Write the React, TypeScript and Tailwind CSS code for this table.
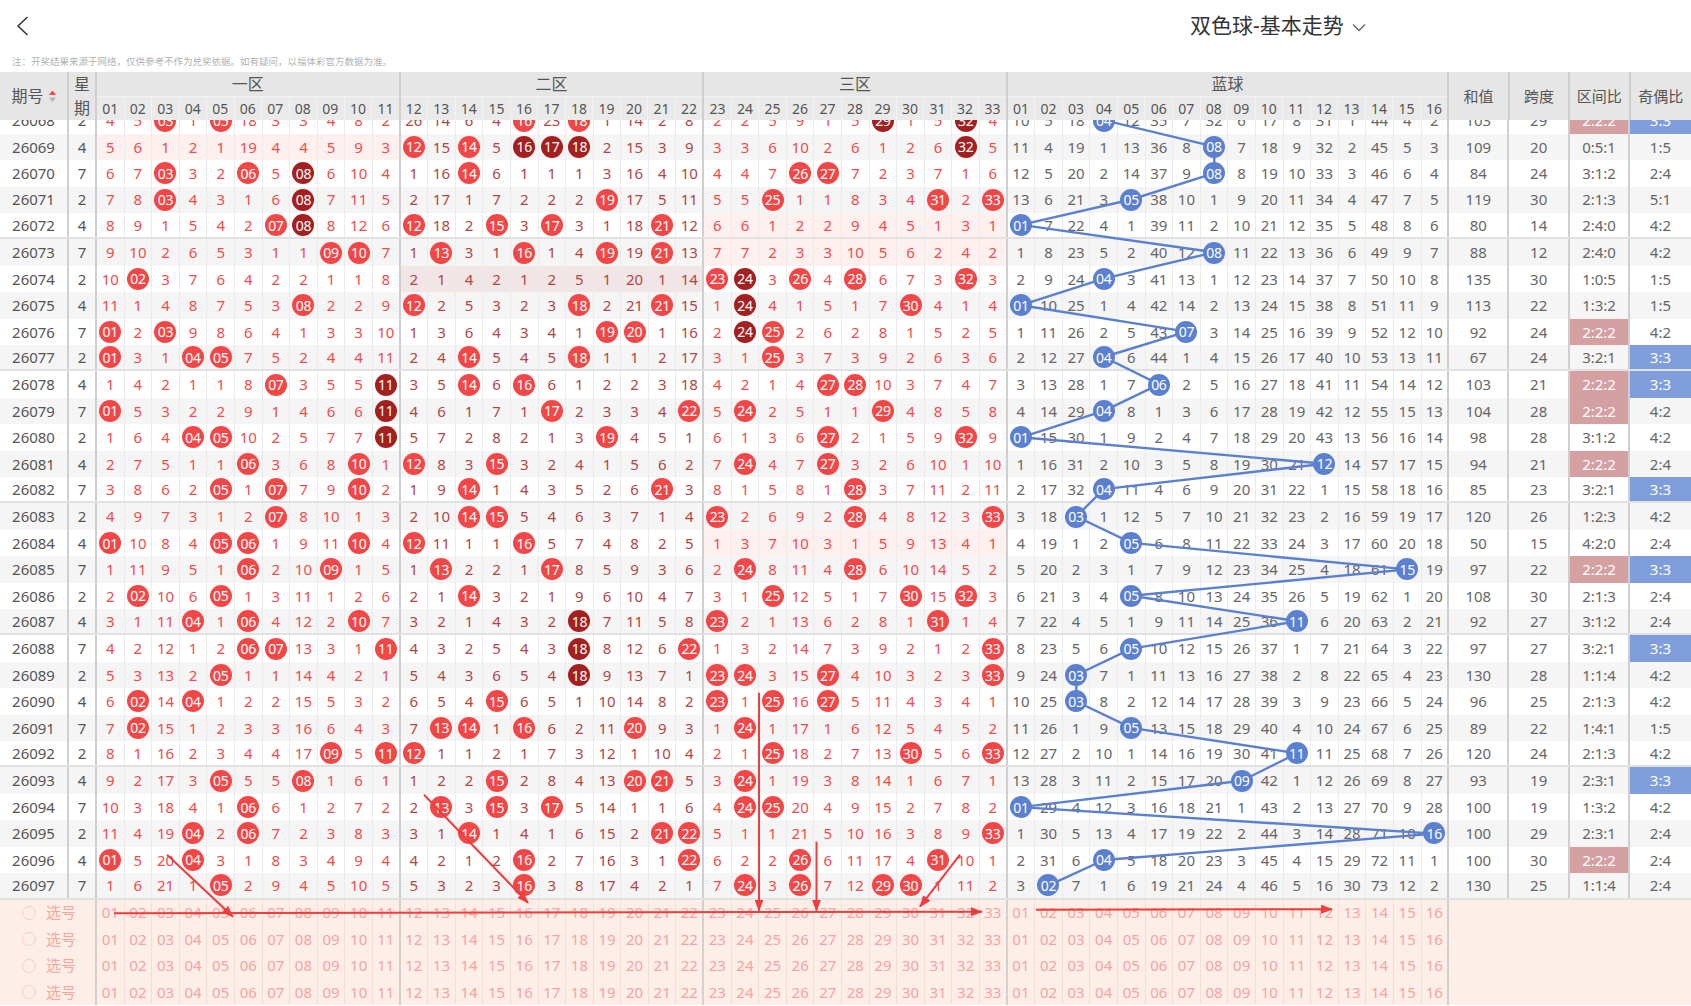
import React from "react";

// 期号|星期|红球遗漏(33)|蓝球遗漏(16)|和值|跨度|区间比|奇偶比   (* = 出球, # = 深色出球)
const RAW = `
26068|2|4 5 * 1 * 18 3 3 4 8 2 26 14 6 4 * 23 * 1 14 2 8 2 2 5 9 1 5 # 1 5 # 4|10 5 18 * 12 35 7 32 6 17 8 31 1 44 4 2|103|29|2:2:2|3:3
26069|4|5 6 1 2 1 19 4 4 5 9 3 * 15 * 5 # # # 2 15 3 9 3 3 6 10 2 6 1 2 6 # 5|11 4 19 1 13 36 8 * 7 18 9 32 2 45 5 3|109|20|0:5:1|1:5
26070|7|6 7 * 3 2 * 5 # 6 10 4 1 16 * 6 1 1 1 3 16 4 10 4 4 7 * * 7 2 3 7 1 6|12 5 20 2 14 37 9 * 8 19 10 33 3 46 6 4|84|24|3:1:2|2:4
26071|2|7 8 * 4 3 1 6 # 7 11 5 2 17 1 7 2 2 2 * 17 5 11 5 5 * 1 1 8 3 4 * 2 *|13 6 21 3 * 38 10 1 9 20 11 34 4 47 7 5|119|30|2:1:3|5:1
26072|4|8 9 1 5 4 2 * # 8 12 6 * 18 2 * 3 * 3 1 18 * 12 6 6 1 2 2 9 4 5 1 3 1|* 7 22 4 1 39 11 2 10 21 12 35 5 48 8 6|80|14|2:4:0|4:2
26073|7|9 10 2 6 5 3 1 1 * * 7 1 * 3 1 * 1 4 * 19 * 13 7 7 2 3 3 10 5 6 2 4 2|1 8 23 5 2 40 12 * 11 22 13 36 6 49 9 7|88|12|2:4:0|4:2
26074|2|10 * 3 7 6 4 2 2 1 1 8 2 1 4 2 1 2 5 1 20 1 14 * # 3 * 4 * 6 7 3 * 3|2 9 24 * 3 41 13 1 12 23 14 37 7 50 10 8|135|30|1:0:5|1:5
26075|4|11 1 4 8 7 5 3 * 2 2 9 * 2 5 3 2 3 * 2 21 * 15 1 # 4 1 5 1 7 * 4 1 4|* 10 25 1 4 42 14 2 13 24 15 38 8 51 11 9|113|22|1:3:2|1:5
26076|7|* 2 * 9 8 6 4 1 3 3 10 1 3 6 4 3 4 1 * * 1 16 2 # * 2 6 2 8 1 5 2 5|1 11 26 2 5 43 * 3 14 25 16 39 9 52 12 10|92|24|2:2:2|4:2
26077|2|* 3 1 * * 7 5 2 4 4 11 2 4 * 5 4 5 * 1 1 2 17 3 1 * 3 7 3 9 2 6 3 6|2 12 27 * 6 44 1 4 15 26 17 40 10 53 13 11|67|24|3:2:1|3:3
26078|4|1 4 2 1 1 8 * 3 5 5 # 3 5 * 6 * 6 1 2 2 3 18 4 2 1 4 * * 10 3 7 4 7|3 13 28 1 7 * 2 5 16 27 18 41 11 54 14 12|103|21|2:2:2|3:3
26079|7|* 5 3 2 2 9 1 4 6 6 # 4 6 1 7 1 * 2 3 3 4 * 5 * 2 5 1 1 * 4 8 5 8|4 14 29 * 8 1 3 6 17 28 19 42 12 55 15 13|104|28|2:2:2|4:2
26080|2|1 6 4 * * 10 2 5 7 7 # 5 7 2 8 2 1 3 * 4 5 1 6 1 3 6 * 2 1 5 9 * 9|* 15 30 1 9 2 4 7 18 29 20 43 13 56 16 14|98|28|3:1:2|4:2
26081|4|2 7 5 1 1 * 3 6 8 * 1 * 8 3 * 3 2 4 1 5 6 2 7 * 4 7 * 3 2 6 10 1 10|1 16 31 2 10 3 5 8 19 30 21 * 14 57 17 15|94|21|2:2:2|2:4
26082|7|3 8 6 2 * 1 * 7 9 * 2 1 9 * 1 4 3 5 2 6 * 3 8 1 5 8 1 * 3 7 11 2 11|2 17 32 * 11 4 6 9 20 31 22 1 15 58 18 16|85|23|3:2:1|3:3
26083|2|4 9 7 3 1 2 * 8 10 1 3 2 10 * * 5 4 6 3 7 1 4 * 2 6 9 2 * 4 8 12 3 *|3 18 * 1 12 5 7 10 21 32 23 2 16 59 19 17|120|26|1:2:3|4:2
26084|4|* 10 8 4 * * 1 9 11 * 4 * 11 1 1 * 5 7 4 8 2 5 1 3 7 10 3 1 5 9 13 4 1|4 19 1 2 * 6 8 11 22 33 24 3 17 60 20 18|50|15|4:2:0|2:4
26085|7|1 11 9 5 1 * 2 10 * 1 5 1 * 2 2 1 * 8 5 9 3 6 2 * 8 11 4 * 6 10 14 5 2|5 20 2 3 1 7 9 12 23 34 25 4 18 61 * 19|97|22|2:2:2|3:3
26086|2|2 * 10 6 * 1 3 11 1 2 6 2 1 * 3 2 1 9 6 10 4 7 3 1 * 12 5 1 7 * 15 * 3|6 21 3 4 * 8 10 13 24 35 26 5 19 62 1 20|108|30|2:1:3|2:4
26087|4|3 1 11 * 1 * 4 12 2 * 7 3 2 1 4 3 2 # 7 11 5 8 * 2 1 13 6 2 8 1 * 1 4|7 22 4 5 1 9 11 14 25 36 * 6 20 63 2 21|92|27|3:1:2|2:4
26088|7|4 2 12 1 2 * * 13 3 1 * 4 3 2 5 4 3 # 8 12 6 * 1 3 2 14 7 3 9 2 1 2 *|8 23 5 6 * 10 12 15 26 37 1 7 21 64 3 22|97|27|3:2:1|3:3
26089|2|5 3 13 2 * 1 1 14 4 2 1 5 4 3 6 5 4 # 9 13 7 1 * * 3 15 * 4 10 3 2 3 *|9 24 * 7 1 11 13 16 27 38 2 8 22 65 4 23|130|28|1:1:4|4:2
26090|4|6 * 14 * 1 2 2 15 5 3 2 6 5 4 * 6 5 1 10 14 8 2 * 1 * 16 * 5 11 4 3 4 1|10 25 * 8 2 12 14 17 28 39 3 9 23 66 5 24|96|25|2:1:3|4:2
26091|7|7 * 15 1 2 3 3 16 6 4 3 7 * * 1 * 6 2 11 * 9 3 1 * 1 17 1 6 12 5 4 5 2|11 26 1 9 * 13 15 18 29 40 4 10 24 67 6 25|89|22|1:4:1|1:5
26092|2|8 1 16 2 3 4 4 17 * 5 * * 1 1 2 1 7 3 12 1 10 4 2 1 * 18 2 7 13 * 5 6 *|12 27 2 10 1 14 16 19 30 41 * 11 25 68 7 26|120|24|2:1:3|4:2
26093|4|9 2 17 3 * 5 5 * 1 6 1 1 2 2 * 2 8 4 13 * * 5 3 * 1 19 3 8 14 1 6 7 1|13 28 3 11 2 15 17 20 * 42 1 12 26 69 8 27|93|19|2:3:1|3:3
26094|7|10 3 18 4 1 * 6 1 2 7 2 2 * 3 * 3 * 5 14 1 1 6 4 * * 20 4 9 15 2 7 8 2|* 29 4 12 3 16 18 21 1 43 2 13 27 70 9 28|100|19|1:3:2|4:2
26095|2|11 4 19 * 2 * 7 2 3 8 3 3 1 * 1 4 1 6 15 2 * * 5 1 1 21 5 10 16 3 8 9 *|1 30 5 13 4 17 19 22 2 44 3 14 28 71 10 *|100|29|2:3:1|2:4
26096|4|* 5 20 * 3 1 8 3 4 9 4 4 2 1 2 * 2 7 16 3 1 * 6 2 2 * 6 11 17 4 * 10 1|2 31 6 * 5 18 20 23 3 45 4 15 29 72 11 1|100|30|2:2:2|2:4
26097|7|1 6 21 1 * 2 9 4 5 10 5 5 3 2 3 * 3 8 17 4 2 1 7 * 3 * 7 12 * * 1 11 2|3 * 7 1 6 19 21 24 4 46 5 16 30 73 12 2|130|25|1:1:4|2:4
`;

type Row = {
  id: string;
  wk: string;
  red: string[];
  blue: string[];
  sum: string;
  span: string;
  zone: string;
  oe: string;
};

const ROWS: Row[] = RAW.trim()
  .split("\n")
  .map((line) => {
    const [id, wk, red, blue, sum, span, zone, oe] = line.trim().split("|");
    return { id, wk, red: red.split(" "), blue: blue.split(" "), sum, span, zone, oe };
  });

const RH = 26.42;
const CW = 27.6;
const BLUE_X0 = 1007.8;
const TOP = 107.3; // 首行在页面上的顶边（被表头遮住一半）

const pad = (n: number) => String(n).padStart(2, "0");

function Ball({ n, tone }: { n: number; tone: "red" | "dark" | "blue" }) {
  const bg =
    tone === "red" ? "bg-[#f34747]" : tone === "dark" ? "bg-[#a41f1f]" : "bg-[#5b80d0]";
  return (
    <span
      className={`relative z-20 flex h-[22px] w-[22px] items-center justify-center rounded-full text-[14px] tracking-[-0.3px] text-white ${bg}`}
    >
      {pad(n)}
    </span>
  );
}

function SortIcon() {
  return (
    <svg width="7" height="13" viewBox="0 0 7 13">
      <path d="M3.5 0.5 L7 5 L0 5 Z" fill="#f04848" />
      <path d="M0 7.5 L7 7.5 L3.5 12 Z" fill="#b5b5b5" />
    </svg>
  );
}

function TopBar() {
  return (
    <div className="flex h-[52px] items-center">
      <div className="flex w-[1190px] shrink-0 items-center pl-[16px]">
        <svg width="13" height="20" viewBox="0 0 13 20">
          <polyline points="11.5,1 2,10 11.5,19" fill="none" stroke="#333" strokeWidth="1.5" />
        </svg>
      </div>
      <span className="text-[21px] text-[#333]">双色球-基本走势</span>
      <svg className="ml-[8px] mt-[2px]" width="14" height="9" viewBox="0 0 14 9">
        <polyline points="1,1.5 7,7.5 13,1.5" fill="none" stroke="#666" strokeWidth="1.3" />
      </svg>
    </div>
  );
}

function Header() {
  const zones = [
    { label: "一区", from: 1, n: 11, w: "w-[303.6px]" },
    { label: "二区", from: 12, n: 11, w: "w-[303.6px]" },
    { label: "三区", from: 23, n: 11, w: "w-[303.6px]" },
    { label: "蓝球", from: 1, n: 16, w: "w-[441.6px]" },
  ];
  return (
    <div className="flex h-[48px] bg-[#e6e6e6] text-[#555]">
      <div className="flex w-[69px] shrink-0 items-center justify-center gap-[5px] border-r-2 border-[#cfcfcf] text-[16px]">
        期号
        <SortIcon />
      </div>
      <div className="flex w-[28px] shrink-0 flex-col border-r-2 border-[#cfcfcf] text-[16px]">
        <div className="flex h-[24px] items-center justify-center">星</div>
        <div className="flex h-[24px] items-center justify-center">期</div>
      </div>
      {zones.map((z) => (
        <div key={z.label} className={`flex shrink-0 flex-col border-r-2 border-[#cfcfcf] ${z.w}`}>
          <div className="flex h-[24px] items-center justify-center text-[16px]">{z.label}</div>
          <div className="flex h-[24px] border-t border-[#f1f1f1] bg-[#eaeaea]">
            {Array.from({ length: z.n }, (_, i) => (
              <div
                key={i}
                className={`flex flex-1 items-center justify-center text-[14px] ${i ? "border-l border-[#f3f3f3]" : ""}`}
              >
                {pad(z.from + i)}
              </div>
            ))}
          </div>
        </div>
      ))}
      {["和值", "跨度", "区间比", "奇偶比"].map((t, i) => (
        <div
          key={t}
          className={`flex w-[60.4px] shrink-0 items-center justify-center text-[15px] ${i < 3 ? "border-r-2 border-[#cfcfcf]" : ""}`}
        >
          {t}
        </div>
      ))}
    </div>
  );
}

function DataRow({ r, idx }: { r: Row; idx: number }) {
  const sep = (idx + 1) % 5 === 0;
  const empty = [0, 1, 2].map((z) =>
    r.red.slice(z * 11, z * 11 + 11).every((t) => t !== "*" && t !== "#")
  );
  return (
    <div
      className={`flex h-[26.42px] text-[15px] ${idx % 2 ? "bg-[#f5f5f5]" : "bg-white"} ${sep ? "border-b-2 border-[#e1e1e1]" : ""}`}
    >
      <div className="flex w-[69px] shrink-0 items-center justify-center border-r-2 border-[#cfcfcf] text-[#555]">
        {r.id}
      </div>
      <div className="flex w-[28px] shrink-0 items-center justify-center border-r-2 border-[#cfcfcf] text-[#555]">
        {r.wk}
      </div>
      {r.red.map((t, i) => {
        const z = Math.floor(i / 11);
        const bg = empty[z] ? (z === 1 ? "bg-[#f2e5e5]" : "bg-[#fff0f0]") : "";
        const color = z === 1 ? "text-[#b04646]" : "text-[#f04c4c]";
        const bd = i % 11 === 10 ? "border-r-2 border-[#cfcfcf]" : "border-r border-[#ebebeb]";
        return (
          <div key={i} className={`flex w-[27.6px] shrink-0 items-center justify-center ${bd} ${bg} ${color}`}>
            {t === "*" ? <Ball n={i + 1} tone="red" /> : t === "#" ? <Ball n={i + 1} tone="dark" /> : t}
          </div>
        );
      })}
      {r.blue.map((t, j) => (
        <div
          key={j}
          className={`flex w-[27.6px] shrink-0 items-center justify-center text-[#666] ${j === 15 ? "border-r-2 border-[#cfcfcf]" : "border-r border-[#ebebeb]"}`}
        >
          {t === "*" ? <Ball n={j + 1} tone="blue" /> : t}
        </div>
      ))}
      <div className="flex w-[60.4px] shrink-0 items-center justify-center border-r-2 border-[#cfcfcf] text-[#666]">
        {r.sum}
      </div>
      <div className="flex w-[60.4px] shrink-0 items-center justify-center border-r-2 border-[#cfcfcf] text-[#666]">
        {r.span}
      </div>
      <div
        className={`flex w-[60.4px] shrink-0 items-center justify-center border-r-2 border-[#cfcfcf] ${r.zone === "2:2:2" ? "bg-[#d5a0a2] text-white" : "text-[#666]"}`}
      >
        {r.zone}
      </div>
      <div
        className={`flex w-[60.4px] shrink-0 items-center justify-center ${r.oe === "3:3" ? "bg-[#7f9edb] text-white" : "text-[#666]"}`}
      >
        {r.oe}
      </div>
    </div>
  );
}

function PickRow() {
  return (
    <div className="flex h-[26.42px] bg-[#fdeee8] text-[15px]">
      <div className="flex w-[97px] shrink-0 items-center border-r-2 border-[#d5cfcd] pl-[22px]">
        <span className="h-[14px] w-[14px] rounded-full border border-[#f8cdc4]" />
        <span className="ml-[10px] text-[#f6a69c]">选号</span>
      </div>
      {Array.from({ length: 33 }, (_, i) => (
        <div
          key={i}
          className={`flex w-[27.6px] shrink-0 items-center justify-center text-[#f5a3a3] ${i % 11 === 10 ? "border-r-2 border-[#d5cfcd]" : "border-r border-[#f4ddd7]"}`}
        >
          {pad(i + 1)}
        </div>
      ))}
      {Array.from({ length: 16 }, (_, j) => (
        <div
          key={j}
          className={`flex w-[27.6px] shrink-0 items-center justify-center text-[#f5a3a3] ${j === 15 ? "border-r-2 border-[#d5cfcd]" : "border-r border-[#f4ddd7]"}`}
        >
          {pad(j + 1)}
        </div>
      ))}
      <div className="flex-1" />
    </div>
  );
}

function BlueLines() {
  const pts = ROWS.map((r, idx) => {
    const j = r.blue.indexOf("*");
    const sep = (idx + 1) % 5 === 0;
    const inner = CW - (j === 15 ? 2 : 1);
    const x = BLUE_X0 + j * CW + inner / 2;
    const y = idx * RH + (sep ? 12.21 : 13.21);
    return `${x.toFixed(1)},${y.toFixed(1)}`;
  }).join(" ");
  return (
    <svg
      className="pointer-events-none absolute left-0 top-0 z-10"
      width="1691"
      height={34 * RH}
    >
      <polyline points={pts} fill="none" stroke="#5b80d0" strokeWidth="2.4" strokeLinejoin="round" />
    </svg>
  );
}

function Annotations() {
  const lines: [number, number, number, number][] = [
    [167, 855, 233, 917],
    [424, 795, 528, 903],
    [759, 693, 759, 911],
    [816.5, 842, 816.5, 911],
    [960, 855, 920, 907],
    [114, 913.5, 982, 912],
    [1036, 910, 1332, 909.5],
  ];
  return (
    <svg
      className="pointer-events-none absolute left-0 top-0 z-30"
      width="1691"
      height={34 * RH}
    >
      <defs>
        <marker
          id="ah"
          markerWidth="12"
          markerHeight="9"
          refX="11"
          refY="4.5"
          orient="auto"
          markerUnits="userSpaceOnUse"
        >
          <path d="M0,0 L12,4.5 L0,9 Z" fill="#f03c3c" />
        </marker>
      </defs>
      <g transform={`translate(0,${-TOP})`}>
        {lines.map(([x1, y1, x2, y2], i) => (
          <line
            key={i}
            x1={x1}
            y1={y1}
            x2={x2}
            y2={y2}
            stroke="#f03c3c"
            strokeWidth="2"
            markerEnd="url(#ah)"
          />
        ))}
      </g>
    </svg>
  );
}

export default function App() {
  return (
    <div className="relative h-[1006px] w-[1691px] overflow-hidden bg-white font-['Noto_Sans','Noto_Sans_CJK_SC',sans-serif]">
      <TopBar />
      <div className="flex h-[20px] items-center pl-[12px] text-[9.5px] text-[#b3b3b3]">
        注：开奖结果来源于网络，仅供参考不作为兑奖依据。如有疑问，以福体彩官方数据为准。
      </div>
      <Header />
      <div className="h-[886px] overflow-hidden">
        <div className="relative -mt-[12.7px]">
          {ROWS.map((r, i) => (
            <DataRow key={r.id} r={r} idx={i} />
          ))}
          {[0, 1, 2, 3].map((k) => (
            <PickRow key={k} />
          ))}
          <BlueLines />
          <Annotations />
        </div>
      </div>
    </div>
  );
}
